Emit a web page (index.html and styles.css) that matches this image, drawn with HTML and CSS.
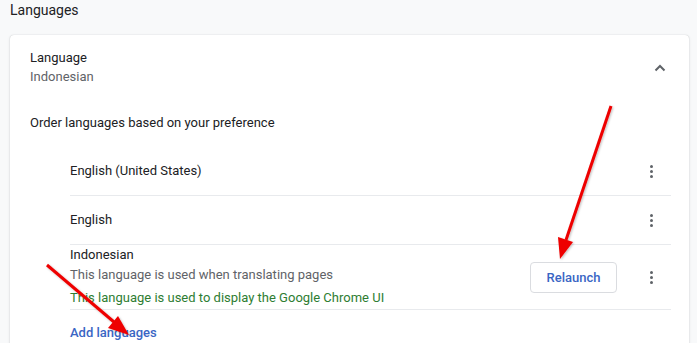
FILE: index.html
```html
<!DOCTYPE html>
<html lang="en">
<head>
    <meta charset="UTF-8">
    <title>Languages</title>
    <link rel="stylesheet" href="styles.css">
</head>
<body>
    <h2 class="page-title">Languages</h2>
    <div class="card">
        <div class="card-header">
            <div>
                <div class="label">Language</div>
                <div class="sub">Indonesian</div>
            </div>
            <svg class="chevron" width="12" height="8" viewBox="0 0 12 8">
                <path d="M1.5 6.5 L6 2 L10.5 6.5" fill="none" stroke="#5f6368" stroke-width="2"/>
            </svg>
        </div>
        <div class="order-label">Order languages based on your preference</div>
        <div class="lang-list">
            <div class="lang-row">
                <div class="lang-name">English (United States)</div>
                <span class="kebab"><i></i><i></i><i></i></span>
            </div>
            <div class="lang-row">
                <div class="lang-name">English</div>
                <span class="kebab"><i></i><i></i><i></i></span>
            </div>
            <div class="lang-row tall">
                <div class="lang-info">
                    <div class="lang-name">Indonesian</div>
                    <div class="sub">This language is used when translating pages</div>
                    <div class="green">This language is used to display the Google Chrome UI</div>
                </div>
                <button class="relaunch">Relaunch</button>
                <span class="kebab"><i></i><i></i><i></i></span>
            </div>
            <div class="add-row">Add languages</div>
        </div>
    </div>

    <svg class="arrows" width="697" height="343" viewBox="0 0 697 343">
        <defs>
            <filter id="shadow" x="-20%" y="-20%" width="140%" height="140%">
                <feDropShadow dx="1" dy="1" stdDeviation="1" flood-color="#000" flood-opacity="0.25"/>
            </filter>
        </defs>
        <g filter="url(#shadow)" fill="#e00" stroke="#e00">
            <line x1="611" y1="106" x2="566" y2="240" stroke-width="3"/>
            <polygon points="560,259 558,237 573,242" stroke="none"/>
            <line x1="47" y1="265" x2="114" y2="322" stroke-width="3"/>
            <polygon points="129,335 108,328 118,316" stroke="none"/>
        </g>
    </svg>
</body>
</html>
```

FILE: styles.css
```css
body {
    margin: 0;
    background-color: #f8f9fa;
    font-family: Roboto, "Liberation Sans", sans-serif;
    font-size: 13px;
    color: #202124;
    width: 697px;
    height: 343px;
    overflow: hidden;
    position: relative;
}
.page-title {
    margin: 0;
    padding: 1px 0 0 10px;
    font-size: 14px;
    font-weight: 400;
    line-height: 18px;
    color: #202124;
}
.card {
    margin: 16px 0 0 10px;
    width: 679px;
    height: 320px;
    background-color: white;
    border-radius: 4px;
    box-shadow: 0 0 1px rgba(60,64,67,0.3), 0 1px 3px rgba(60,64,67,0.15);
}
.card-header {
    display: flex;
    justify-content: space-between;
    align-items: center;
    padding: 8px 23px 0 20px;
    height: 50px;
}
.label {
    line-height: 18px;
}
.sub {
    color: #5f6368;
    line-height: 20px;
}
.chevron {
    display: block;
}
.order-label {
    padding: 21px 0 0 20px;
    line-height: 18px;
}
.lang-list {
    margin: 15px 18px 0 60px;
}
.lang-row {
    display: flex;
    align-items: center;
    height: 48px;
    border-bottom: 1px solid #e8eaed;
}
.lang-row.tall {
    height: 64px;
    align-items: flex-start;
}
.lang-name {
    flex: 1;
    line-height: 18px;
}
.lang-info {
    flex: 1;
    padding-top: 1px;
}
.lang-info .sub {
    line-height: 21px;
}
.green {
    color: #2e7d32;
    line-height: 22px;
    margin-top: 2px;
}
.relaunch {
    font-family: Roboto, "Liberation Sans", sans-serif;
    font-size: 13px;
    font-weight: 500;
    color: #3a66c4;
    background: white;
    border: 1px solid #dadce0;
    border-radius: 4px;
    width: 87px;
    height: 31px;
    margin: 17px 33px 0 0;
}
.kebab {
    display: flex;
    flex-direction: column;
    gap: 2px;
    width: 4px;
    margin-right: 17px;
}
.lang-row.tall .kebab {
    margin-top: 26px;
}
.kebab i {
    width: 3px;
    height: 3px;
    border-radius: 50%;
    background: #5f6368;
}
.add-row {
    padding-top: 14px;
    color: #3a66c4;
    font-weight: 500;
    line-height: 18px;
}
.arrows {
    position: absolute;
    left: 0;
    top: 0;
    pointer-events: none;
}
```
